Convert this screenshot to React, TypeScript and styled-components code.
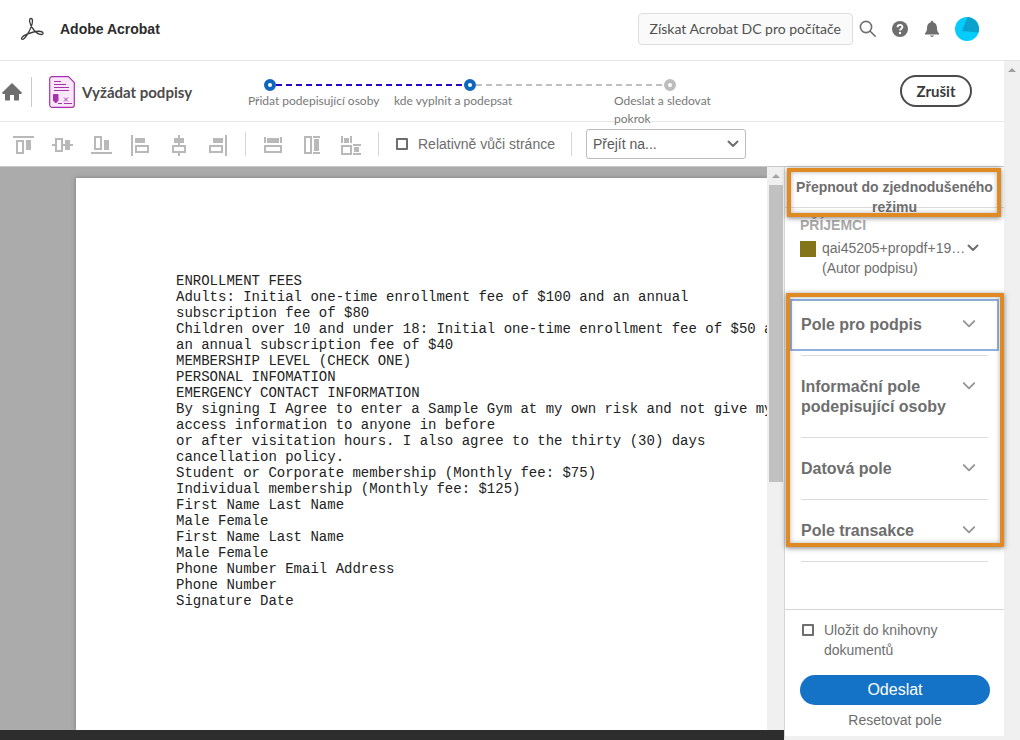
import React from "react";
import styled, { createGlobalStyle } from "styled-components";

const sans = `"Liberation Sans", Arial, sans-serif`;
const clean = `Lato, "Open Sans", sans-serif`;

const GlobalStyle = createGlobalStyle`
  *, *::before, *::after { box-sizing: border-box; }
  body { margin: 0; background: #fff; color: #6e6e6e; font-family: ${sans}; font-size: 14px; line-height: 20px; }
  button, select, input { font: inherit; color: inherit; margin: 0; }
  button { padding: 0; border: 0; background: none; cursor: pointer; }
  h1, h2, h3, ol, ul, p { margin: 0; padding: 0; font-size: inherit; font-weight: inherit; list-style: none; }
  svg { display: block; flex: none; }
`;

const Screen = styled.div`
  display: flex;
  flex-direction: column;
  min-height: 100vh;
`;

const Header = styled.header`
  display: flex;
  align-items: center;
  height: 61px;
  padding: 0 40px 3px 20px;
  border-bottom: 1px solid #e4e4e4;
`;

const Brand = styled.a`
  display: flex;
  align-items: center;
  gap: 16px;
  color: #2c2c2c;
  font-size: 14px;
  font-weight: bold;
  text-decoration: none;
`;

const HeaderActions = styled.div`
  display: flex;
  align-items: center;
  gap: 12px;
  margin-left: auto;
`;

const GetAppButton = styled.button`
  height: 32px;
  margin-right: -7px;
  padding: 0 11px;
  border: 1px solid #dedede;
  border-radius: 4px;
  background: #fafafa;
  color: #505050;
  font-family: ${clean};
  font-size: 14px;
  white-space: nowrap;
`;

const RoundButton = styled.button<{ $size?: number }>`
  display: grid;
  place-items: center;
  width: ${(p) => p.$size ?? 20}px;
  height: ${(p) => p.$size ?? 20}px;
`;

const Body = styled.div`
  display: flex;
  flex: 1;
`;

const Main = styled.main`
  display: flex;
  flex: 1;
  flex-direction: column;
  min-width: 0;
`;

const Scrollbar = styled.div<{ $width: number }>`
  display: flex;
  flex-direction: column;
  align-items: center;
  flex: none;
  width: ${(p) => p.$width}px;
  padding-top: 7px;
  background: #f0f0f0;
`;

const ArrowUp = styled.span`
  border: 4px solid transparent;
  border-top: 0;
  border-bottom-color: #a0a0a0;
`;

const Thumb = styled.span`
  width: 14px;
  height: 297px;
  margin-top: 7px;
  background: #c1c1c1;
`;

const TaskBar = styled.section`
  display: flex;
  align-items: flex-start;
  height: 61px;
  padding-right: 32px;
  border-bottom: 1px solid #e6e6e6;
`;

const TaskTitle = styled.div`
  display: flex;
  align-items: center;
  flex: none;
  width: 248px;
  height: 61px;
  color: #4b4b4b;
  font-family: ${clean};
  font-size: 15px;
  font-weight: bold;
`;

const TitleDivider = styled.span`
  width: 1px;
  height: 30px;
  margin: 0 17px 0 8px;
  background: #cacaca;
`;

const TitleText = styled.h1`
  margin-left: 7px;
`;

const Steps = styled.div`
  flex: none;
  padding-top: 18px;
  color: #777;
  font-family: ${clean};
  font-size: 12px;
  line-height: 18px;
`;

const Track = styled.div`
  display: flex;
  align-items: center;
  padding-left: 16px;
`;

const Dot = styled.span<{ $done?: boolean }>`
  width: 12px;
  height: 12px;
  border: 4px solid ${(p) => (p.$done ? "#0d66bf" : "#bdbdbd")};
  border-radius: 50%;
`;

const Dash = styled.span<{ $done?: boolean }>`
  width: 188px;
  height: 2px;
  background: repeating-linear-gradient(
    90deg,
    ${(p) => (p.$done ? "#2607c6" : "#c0c0c0")} 0 6px,
    transparent 6px 10px
  );
`;

const StepLabels = styled.ol`
  display: grid;
  grid-template-columns: 146px 220px 110px;
  margin-top: 1px;
`;

const StepText = styled.span`
  background: #fff;
`;

const CancelButton = styled.button`
  width: 72px;
  height: 32px;
  margin: 14px 0 0 auto;
  border: 2px solid #4b4b4b;
  border-radius: 16px;
  background: #fff;
  color: #3a3a3a;
  font-family: ${clean};
  font-size: 15px;
  font-weight: bold;
`;

const Toolbar = styled.div`
  display: flex;
  align-items: center;
  gap: 16px;
  height: 45px;
  padding-left: 12px;
  border-bottom: 1px solid #c8c8c8;
`;

const ToolGroup = styled.div`
  display: flex;
  gap: 17px;
  padding-top: 2px;
`;

const ToolButton = styled.button`
  width: 22px;
  height: 22px;
  color: #b9b9b9;
`;

const Divider = styled.span`
  width: 1px;
  height: 24px;
  background: #d8d8d8;
`;

const CheckLabel = styled.label`
  display: flex;
  align-items: flex-start;
  gap: 10px;
  white-space: pre-line;
`;

const Checkbox = styled.input`
  appearance: none;
  flex: none;
  width: 12px;
  height: 12px;
  margin: 4px 0 0 1px;
  border: 2px solid #6e6e6e;
  border-radius: 1px;
  background: #fff;
`;

const SelectWrap = styled.div`
  display: grid;
  align-items: center;
  width: 160px;
  margin-left: -2px;
  & > * { grid-area: 1 / 1; }
  & > svg { justify-self: end; margin-right: 7px; pointer-events: none; }
`;

const Select = styled.select`
  appearance: none;
  width: 100%;
  height: 30px;
  padding: 0 6px;
  border: 1px solid #bcbcbc;
  border-radius: 3px;
  background: #fff;
  color: #5a5a5a;
`;

const Workspace = styled.div`
  display: flex;
  flex: 1;
`;

const Viewer = styled.section`
  display: flex;
  flex: 1;
  flex-direction: column;
  min-width: 0;
`;

const Canvas = styled.div`
  display: flex;
  flex: 1;
  background: #ababab;
`;

const Sheet = styled.article`
  flex: 1;
  min-width: 0;
  margin: 11px 0 0 76px;
  padding: 95px 0 0 100px;
  overflow: hidden;
  background: #fff;
  box-shadow: 0 0 4px #777;
  color: #222;
  font-family: "Liberation Mono", "Courier New", monospace;
  font-size: 14px;
  line-height: 16px;
  white-space: pre;
`;

const BottomStrip = styled.div`
  height: 10px;
  background: #2d2d2d;
`;

const Side = styled.aside`
  display: flex;
  flex-direction: column;
  flex: none;
  width: 220px;
  border-left: 1px solid #d5d5d5;
  border-bottom: 4px solid #f0f0f0;
`;

const ModeSwitch = styled.div`
  position: relative;
  height: 41px;
  padding-top: 10px;
  border-bottom: 1px solid #dcdcdc;
`;

const ModeButton = styled.button`
  display: block;
  width: 100%;
  padding: 0 8px;
  font-weight: bold;
`;

const Callout = styled.div<{ $inset: string }>`
  position: absolute;
  inset: ${(p) => p.$inset};
  border: 4px solid #e08a24;
  box-shadow: 0 1px 5px rgba(0, 0, 0, 0.5), inset 0 0 5px rgba(0, 0, 0, 0.3);
  pointer-events: none;
`;

const SideHeading = styled.h2`
  padding: 7px 15px 0;
  color: #a9a9a9;
  font-weight: bold;
`;

const Recipient = styled.button`
  display: flex;
  align-items: flex-start;
  gap: 6px;
  margin: 3px 15px 16px;
  text-align: left;
  & > svg { margin: 4px 0 0 -4px; }
`;

const Swatch = styled.span`
  width: 16px;
  height: 16px;
  margin-top: 3px;
  background: #85751a;
`;

const RecipientName = styled.span`
  white-space: pre-line;
`;

const FieldList = styled.div`
  position: relative;
  margin: 0 16px;
`;

const FieldItem = styled.h3<{ $focused?: boolean }>`
  position: relative;
  padding: 21px 0 20px;
  border-bottom: 1px solid #dcdcdc;
  ${(p) =>
    p.$focused &&
    `&::after {
      content: "";
      position: absolute;
      inset: 5px -11px 4px;
      border: 2px solid #8fb0de;
      pointer-events: none;
    }`}
`;

const FieldButton = styled.button`
  display: flex;
  align-items: flex-start;
  justify-content: space-between;
  width: 100%;
  padding-right: 12px;
  font-size: 16px;
  font-weight: bold;
  text-align: left;
  white-space: pre-line;
  & > svg { margin-top: 2px; }
`;

const SideFooter = styled.footer`
  display: flex;
  flex-direction: column;
  margin-top: auto;
  padding: 10px 14px 6px 15px;
  border-top: 1px solid #d5d5d5;
  & > ${CheckLabel} { padding-left: 1px; }
`;

const SendButton = styled.button`
  height: 30px;
  margin: 15px 0 5px;
  border-radius: 15px;
  background: #1473c6;
  color: #fff;
  font-size: 16px;
`;

const Chevron = ({ color = "#6e6e6e", width = 2, size = 12 }: { color?: string; width?: number; size?: number }) => (
  <svg width={size} height={size} viewBox="0 0 12 12" fill="none" stroke={color} strokeWidth={width} strokeLinecap="round" strokeLinejoin="round">
    <path d="M1.5 3.5 6 8l4.5-4.5" />
  </svg>
);

type Box = [number, number, number, number];

/* Each tool is drawn from one hollow box and a set of solid bars: x, y, width, height. */
const alignTools: { name: string; hollow: Box; solid: Box[] }[] = [
  { name: "Zarovnat nahoru", hollow: [4, 6, 8, 14], solid: [[1, 2, 21, 2], [14, 6, 5, 10]] },
  { name: "Zarovnat svisle na střed", hollow: [4, 4, 8, 14], solid: [[1, 10, 3, 2], [12, 10, 10, 2], [14, 6, 5, 10]] },
  { name: "Zarovnat dolů", hollow: [4, 2, 8, 14], solid: [[1, 18, 21, 2], [14, 6, 5, 10]] },
  { name: "Zarovnat vlevo", hollow: [6, 11, 14, 8], solid: [[2, 1, 2, 21], [6, 4, 10, 5]] },
  { name: "Zarovnat vodorovně na střed", hollow: [4, 11, 14, 8], solid: [[10, 1, 2, 10], [10, 19, 2, 3], [6, 4, 10, 5]] },
  { name: "Zarovnat vpravo", hollow: [2, 11, 14, 8], solid: [[18, 1, 2, 21], [6, 4, 10, 5]] },
];

const sizeTools: typeof alignTools = [
  { name: "Stejná šířka", hollow: [2, 11, 18, 8], solid: [[2, 3, 2, 6], [18, 3, 2, 6], [5, 4, 12, 5]] },
  { name: "Stejná výška", hollow: [3, 2, 8, 18], solid: [[12, 2, 7, 2], [12, 18, 7, 2], [13, 5, 5, 12]] },
  { name: "Stejná velikost", hollow: [1, 11, 11, 10], solid: [[1, 2, 2, 7], [10, 2, 2, 7], [4, 4, 5, 5], [13, 10, 8, 2], [13, 19, 8, 2], [14, 13, 5, 5]] },
];

const Tools = ({ items }: { items: typeof alignTools }) => (
  <ToolGroup>
    {items.map(({ name, hollow: [x, y, w, h], solid }) => (
      <ToolButton key={name} aria-label={name}>
        <svg width="22" height="22" viewBox="0 0 22 22" fill="currentColor">
          <rect x={x + 1} y={y + 1} width={w - 2} height={h - 2} fill="none" stroke="currentColor" strokeWidth="2" />
          {solid.map(([sx, sy, sw, sh], i) => (
            <rect key={i} x={sx} y={sy} width={sw} height={sh} />
          ))}
        </svg>
      </ToolButton>
    ))}
  </ToolGroup>
);

const documentLines = [
  "ENROLLMENT FEES",
  "Adults: Initial one-time enrollment fee of $100 and an annual",
  "subscription fee of $80",
  "Children over 10 and under 18: Initial one-time enrollment fee of $50 and",
  "an annual subscription fee of $40",
  "MEMBERSHIP LEVEL (CHECK ONE)",
  "PERSONAL INFOMATION",
  "EMERGENCY CONTACT INFORMATION",
  "By signing I Agree to enter a Sample Gym at my own risk and not give my",
  "access information to anyone in before",
  "or after visitation hours. I also agree to the thirty (30) days",
  "cancellation policy.",
  "Student or Corporate membership (Monthly fee: $75)",
  "Individual membership (Monthly fee: $125)",
  "First Name Last Name",
  "Male Female",
  "First Name Last Name",
  "Male Female",
  "Phone Number Email Address",
  "Phone Number",
  "Signature Date",
];

const fieldGroups = [
  "Pole pro podpis",
  "Informační pole\npodepisující osoby",
  "Datová pole",
  "Pole transakce",
];

export default function App() {
  return (
    <Screen>
      <GlobalStyle />
      <Header>
        <Brand href="#">
          <svg width="24" height="24" viewBox="0 0 24 24" fill="none" stroke="#3c3c3c" strokeWidth="1.3" strokeLinejoin="round">
            <path d="M11 1.400C12.900 1.400 12.800 5 11.600 8.600 9.600 14.400 5.400 21.600 2.700 22.300.6 22.600.8 19.700 7 17.200c5-2 11-3.400 14-2.700 3 .7 2.600 3.200.2 3C16 17.200 10.200 9.400 9.600 4.500 9.400 2.500 9.900 1.500 11 1.400Z" />
          </svg>
          Adobe Acrobat
        </Brand>
        <HeaderActions>
          <GetAppButton>Získat Acrobat DC pro počítače</GetAppButton>
          <RoundButton aria-label="Hledat">
            <svg width="18" height="18" viewBox="0 0 18 18" fill="none" stroke="#6e6e6e" strokeWidth="1.6" strokeLinecap="round">
              <circle cx="7" cy="7" r="5.600" />
              <path d="m11.200 11.200 5 5" />
            </svg>
          </RoundButton>
          <RoundButton aria-label="Nápověda">
            <svg width="16" height="16" viewBox="0 0 16 16" fill="none">
              <circle cx="8" cy="8" r="8" fill="#6e6e6e" />
              <path d="M5.600 6.200C5.600 3.200 10.400 3.200 10.400 6 10.400 7.600 8 7.800 8 9.600" stroke="#fff" strokeWidth="1.900" />
              <circle cx="8" cy="12" r="1.200" fill="#fff" />
            </svg>
          </RoundButton>
          <RoundButton aria-label="Oznámení">
            <svg width="14" height="18" viewBox="0 0 14 18" fill="#6e6e6e">
              <path d="M7 .8c.8 0 1.200.6 1.200 1.400 2.400.6 3.600 2.400 3.700 4.900.1 3.400.6 4.900 2.100 6.200v1.200H0v-1.200c1.500-1.300 2-2.800 2.100-6.200.1-2.500 1.300-4.300 3.700-4.900C5.800 1.400 6.200.8 7 .8ZM5 15.600h4C8.700 17.500 5.300 17.500 5 15.600Z" />
            </svg>
          </RoundButton>
          <RoundButton aria-label="Profil" $size={26}>
            <svg width="24" height="24" viewBox="0 0 24 24">
              <circle cx="12" cy="12" r="12" fill="#04ccfc" />
              <path d="M12.500.1A12 12 0 0 1 23.500 15.500L7 14Z" fill="#0aa2cd" />
            </svg>
          </RoundButton>
        </HeaderActions>
      </Header>
      <Body>
        <Main>
          <TaskBar>
            <TaskTitle>
              <RoundButton aria-label="Domů" $size={23}>
                <svg width="20" height="18" viewBox="0 0 20 18" fill="#6e6e6e">
                  <path d="M10 0 20 9.800 19.200 11H17v6.500H12V12H8v5.500H3V11H.8L0 9.800Z" />
                </svg>
              </RoundButton>
              <TitleDivider />
              <svg width="26" height="32" viewBox="0 0 26 32" fill="none" stroke="#a832ae">
                <path d="M3 .7H19.500L25.300 6.500V29a2.300 2.300 0 0 1-2.300 2.300H3A2.300 2.300 0 0 1 .7 29V3A2.300 2.300 0 0 1 3 .7Z" fill="#fae8fa" strokeWidth="1.200" />
                <path d="M5 5.500h7M5 8.500h12M5 11.500h15M5 14.500h15M9 27.500h4M15 27.500h8M15 21.500l4 4M19 21.500l-4 4" />
                <path d="M4.500 18.500h4.500v6l-2.250 2.500-2.250-2.500Z" fill="#a832ae" />
              </svg>
              <TitleText>Vyžádat podpisy</TitleText>
            </TaskTitle>
            <Steps>
              <Track>
                <Dot $done />
                <Dash $done />
                <Dot $done />
                <Dash />
                <Dot />
              </Track>
              <StepLabels>
                <li><StepText>Přidat podepisující osoby</StepText></li>
                <li><StepText>kde vyplnit a podepsat</StepText></li>
                <li><StepText>Odeslat a sledovat pokrok</StepText></li>
              </StepLabels>
            </Steps>
            <CancelButton>Zrušit</CancelButton>
          </TaskBar>
          <Toolbar>
            <Tools items={alignTools} />
            <Divider />
            <Tools items={sizeTools} />
            <Divider />
            <CheckLabel>
              <Checkbox type="checkbox" />
              Relativně vůči stránce
            </CheckLabel>
            <Divider />
            <SelectWrap>
              <Select aria-label="Přejít na" defaultValue="">
                <option value="">Přejít na...</option>
              </Select>
              <Chevron />
            </SelectWrap>
          </Toolbar>
          <Workspace>
            <Viewer>
              <Canvas>
                <Sheet>
                  {documentLines.map((line, i) => (
                    <p key={i}>{line}</p>
                  ))}
                </Sheet>
                <Scrollbar $width={17}>
                  <ArrowUp />
                  <Thumb />
                </Scrollbar>
              </Canvas>
              <BottomStrip />
            </Viewer>
            <Side>
              <ModeSwitch>
                <ModeButton>Přepnout do zjednodušeného režimu</ModeButton>
                <Callout $inset="1px 3px -10px 2px" />
              </ModeSwitch>
              <SideHeading>PŘÍJEMCI</SideHeading>
              <Recipient>
                <Swatch />
                <RecipientName>{"qai45205+propdf+19…\n(Autor podpisu)"}</RecipientName>
                <Chevron />
              </Recipient>
              <FieldList>
                {fieldGroups.map((name, i) => (
                  <FieldItem key={name} $focused={i === 0}>
                    <FieldButton aria-expanded={false}>
                      {name}
                      <Chevron color="#959595" size={14} width={1.6} />
                    </FieldButton>
                  </FieldItem>
                ))}
                <Callout $inset="-1px -16px 15px -15px" />
              </FieldList>
              <SideFooter>
                <CheckLabel>
                  <Checkbox type="checkbox" />
                  {"Uložit do knihovny\ndokumentů"}
                </CheckLabel>
                <SendButton>Odeslat</SendButton>
                <button>Resetovat pole</button>
              </SideFooter>
            </Side>
          </Workspace>
        </Main>
        <Scrollbar $width={16}>
          <ArrowUp />
        </Scrollbar>
      </Body>
    </Screen>
  );
}
